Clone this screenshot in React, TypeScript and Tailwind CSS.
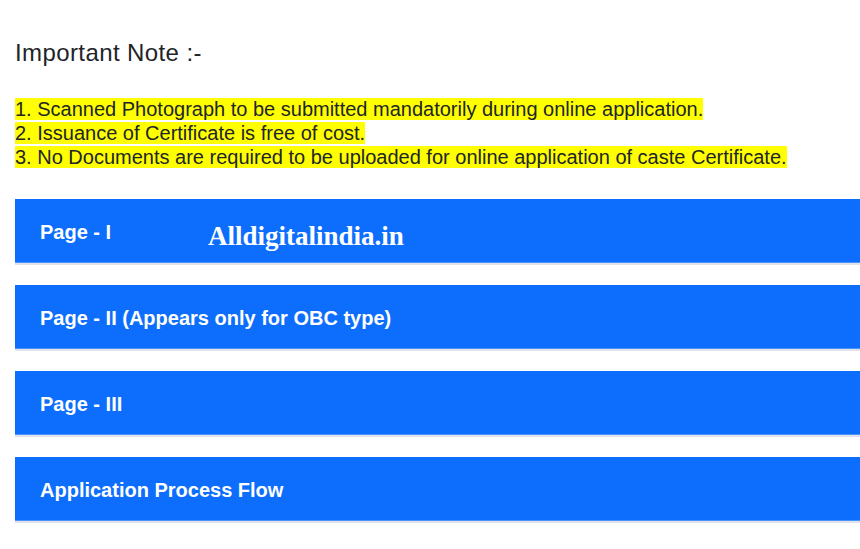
const bars = [
  "Page - I",
  "Page - II (Appears only for OBC type)",
  "Page - III",
  "Application Process Flow",
];

const notes = [
  "1. Scanned Photograph to be submitted mandatorily during online application.",
  "2. Issuance of Certificate is free of cost.",
  "3. No Documents are required to be uploaded for online application of caste Certificate.",
];

export default function App() {
  return (
    <div className="min-h-[549px] w-[860px] overflow-hidden bg-white font-['Liberation_Sans',Arial,sans-serif] text-[#212529]">
      <div className="pl-[15px] pt-[38px]">
        <h2 className="text-[24px] leading-[30px] tracking-[0.4px]">Important Note :-</h2>
        <div className="mt-[29px] text-[20px] leading-[24px]">
          {notes.map((n) => (
            <div key={n}>
              <span className="bg-[#ffff00]">{n}</span>
            </div>
          ))}
        </div>
        <div className="mt-[30px] flex flex-col gap-[20px]">
          {bars.map((label, i) => (
            <div key={label} className="w-[860px] border-b-2 border-[#dfe2e6]">
              <div className="relative flex h-[64px] items-center border-b border-[#4a92fd] bg-[#0d6efd] pl-[25px] pt-[3px]">
                <span className="text-[20px] font-bold text-white">{label}</span>
                {i === 0 && (
                  <span className="absolute left-[193px] top-[17px] font-['Liberation_Serif',serif] text-[27px] font-bold text-white">
                    Alldigitalindia.in
                  </span>
                )}
              </div>
            </div>
          ))}
        </div>
      </div>
    </div>
  );
}
